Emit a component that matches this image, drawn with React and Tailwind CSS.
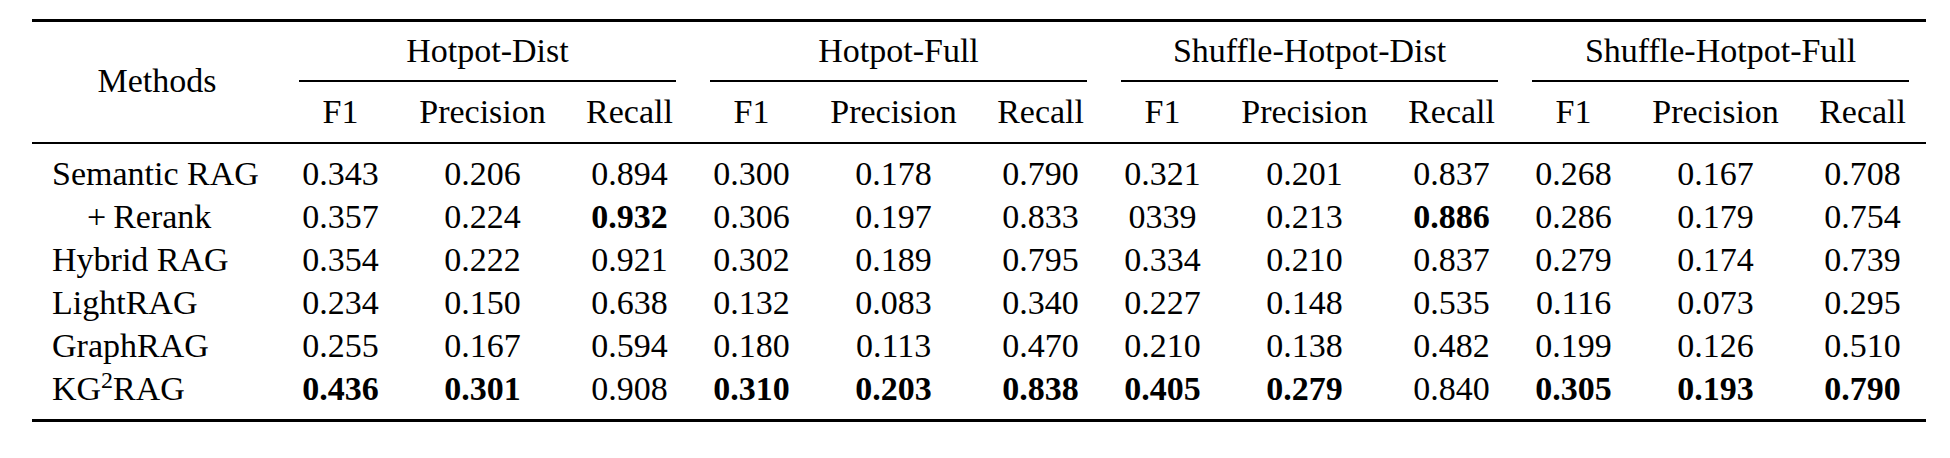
import React from "react";

const rows = [
  { name: "Semantic RAG", vals: ["0.343","0.206","0.894","0.300","0.178","0.790","0.321","0.201","0.837","0.268","0.167","0.708"], bold: [] },
  { name: "+Rerank", vals: ["0.357","0.224","0.932","0.306","0.197","0.833","0339","0.213","0.886","0.286","0.179","0.754"], bold: [2, 8] },
  { name: "Hybrid RAG", vals: ["0.354","0.222","0.921","0.302","0.189","0.795","0.334","0.210","0.837","0.279","0.174","0.739"], bold: [] },
  { name: "LightRAG", vals: ["0.234","0.150","0.638","0.132","0.083","0.340","0.227","0.148","0.535","0.116","0.073","0.295"], bold: [] },
  { name: "GraphRAG", vals: ["0.255","0.167","0.594","0.180","0.113","0.470","0.210","0.138","0.482","0.199","0.126","0.510"], bold: [] },
  { name: "KG2RAG", vals: ["0.436","0.301","0.908","0.310","0.203","0.838","0.405","0.279","0.840","0.305","0.193","0.790"], bold: [0,1,3,4,5,6,7,9,10,11] },
];

const groups = ["Hotpot-Dist", "Hotpot-Full", "Shuffle-Hotpot-Dist", "Shuffle-Hotpot-Full"];
const subs = ["F1", "Precision", "Recall"];

function MethodName({ name }) {
  if (name === "+Rerank") {
    return (
      <span className="pl-[35px]">
        <span className="mr-[7px]">+</span>Rerank
      </span>
    );
  }
  if (name === "KG2RAG") {
    return (
      <span>
        KG<sup className="text-[24px]">2</sup>RAG
      </span>
    );
  }
  return <span>{name}</span>;
}

const serif = "font-['Liberation_Serif','Times_New_Roman',serif]";

export default function App() {
  return (
    <div className={`w-[1950px] h-[458px] bg-white text-black pt-[19px] pl-[32px] text-[34px] ${serif}`}>
      <table className={`table-fixed w-[1894px] border-separate border-spacing-0 ${serif}`}>
        <colgroup>
          <col className="w-[250px]" />
          {groups.map((g) => (
            <React.Fragment key={g}>
              <col className="w-[117px]" />
              <col className="w-[167px]" />
              <col className="w-[127px]" />
            </React.Fragment>
          ))}
        </colgroup>
        <thead>
          <tr>
            <th
              rowSpan={2}
              className={`${serif} font-normal text-center align-middle border-t-[3px] border-b-2 border-black p-0 pb-[3px]`}
            >
              Methods
            </th>
            {groups.map((g) => (
              <th
                key={g}
                colSpan={3}
                className={`${serif} font-normal text-center align-bottom border-t-[3px] border-black p-0`}
              >
                <div className="leading-[58px]">{g}</div>
                <div className="mx-[17px] h-[1.5px] bg-black" />
              </th>
            ))}
          </tr>
          <tr>
            {groups.map((g) =>
              subs.map((s) => (
                <th
                  key={g + s}
                  className={`${serif} font-normal text-center leading-[60px] border-b-2 border-black p-0`}
                >
                  {s}
                </th>
              ))
            )}
          </tr>
        </thead>
        <tbody>
          {rows.map((r, ri) => {
            const first = ri === 0;
            const last = ri === rows.length - 1;
            const cellPad = first ? "pt-[8px]" : last ? "pb-[9px] border-b-[3px] border-black" : "";
            return (
              <tr key={r.name}>
                <td className={`${serif} text-left leading-[43px] pl-[20px] whitespace-nowrap p-0 ${cellPad}`}>
                  <MethodName name={r.name} />
                </td>
                {r.vals.map((v, vi) =>
                  r.bold.includes(vi) ? (
                    <td key={vi} className={`${serif} font-bold text-center leading-[43px] p-0 ${cellPad}`}>
                      {v}
                    </td>
                  ) : (
                    <td key={vi} className={`${serif} text-center leading-[43px] p-0 ${cellPad}`}>
                      {v}
                    </td>
                  )
                )}
              </tr>
            );
          })}
        </tbody>
      </table>
    </div>
  );
}
